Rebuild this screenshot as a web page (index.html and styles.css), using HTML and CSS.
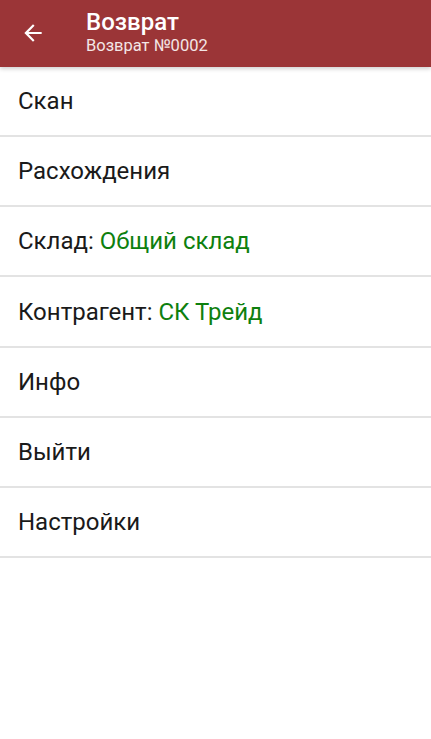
FILE: index.html
```
<!DOCTYPE html>
<html lang="ru">
<head>
    <meta charset="UTF-8">
    <meta name="viewport" content="width=device-width, initial-scale=1.0">
    <title>Возврат</title>
    <link rel="stylesheet" href="styles.css">
</head>
<body>
    <!-- Toolbar -->
    <div class="toolbar">
        <button class="back-btn">
            <svg viewBox="0 0 24 24" width="26" height="26"><path fill="#fff" d="M20 11H7.83l5.59-5.59L12 4l-8 8 8 8 1.41-1.41L7.83 13H20v-2z"/></svg>
        </button>
        <div class="toolbar-titles">
            <div class="toolbar-title">Возврат</div>
            <div class="toolbar-subtitle">Возврат №0002</div>
        </div>
    </div>

    <!-- Menu -->
    <div class="menu">
        <div class="menu-item">Скан</div>
        <div class="menu-item">Расхождения</div>
        <div class="menu-item">Склад: <span class="value">Общий склад</span></div>
        <div class="menu-item">Контрагент: <span class="value">СК Трейд</span></div>
        <div class="menu-item">Инфо</div>
        <div class="menu-item">Выйти</div>
        <div class="menu-item">Настройки</div>
    </div>
</body>
</html>
```
FILE: styles.css
```
body {
    margin: 0;
    background: #fff;
    font-family: Roboto, "Noto Sans", sans-serif;
    color: #1a1a1a;
}

/* Toolbar */
.toolbar {
    height: 67px;
    background: #9b3537;
    display: flex;
    align-items: center;
    box-shadow: 0 2px 4px rgba(0,0,0,0.18);
    position: relative;
    z-index: 1;
}

.back-btn {
    background: none;
    border: none;
    padding: 0;
    margin-left: 20px;
    width: 26px;
    height: 26px;
    display: flex;
    margin-top: -2px;
}

.toolbar-titles {
    margin-left: 40px;
    display: flex;
    flex-direction: column;
    color: #fff;
}

.toolbar-title {
    font-size: 24px;
    font-weight: 500;
    line-height: 28px;
    margin-top: -4px;
}

.toolbar-subtitle {
    font-size: 16.5px;
    line-height: 20px;
    color: #f3e6e6;
    margin-top: 0;
}

/* Menu */
.menu-item {
    height: 68.17px;
    display: flex;
    align-items: center;
    padding-left: 18px;
    font-size: 24px;
    border-bottom: 2px solid #e3e3e3;
    white-space: pre;
}

.value {
    color: #0e800e;
}
```
